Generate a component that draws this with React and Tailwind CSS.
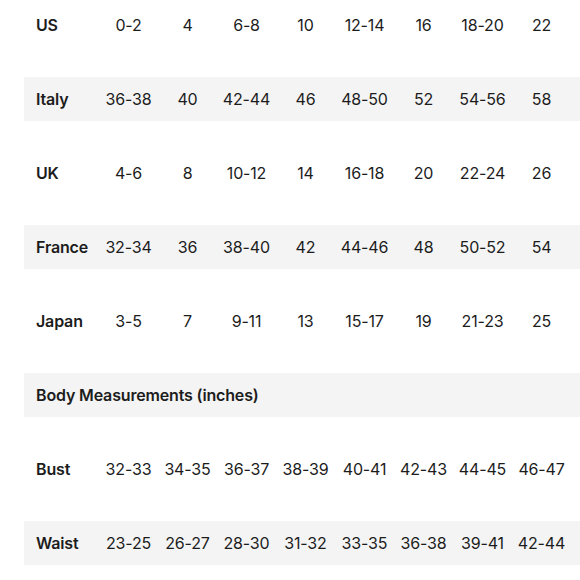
const sizes = [
  { label: 'US', values: ['0-2', '4', '6-8', '10', '12-14', '16', '18-20', '22'] },
  { label: 'Italy', values: ['36-38', '40', '42-44', '46', '48-50', '52', '54-56', '58'], shaded: true },
  { label: 'UK', values: ['4-6', '8', '10-12', '14', '16-18', '20', '22-24', '26'] },
  { label: 'France', values: ['32-34', '36', '38-40', '42', '44-46', '48', '50-52', '54'], shaded: true },
  { label: 'Japan', values: ['3-5', '7', '9-11', '13', '15-17', '19', '21-23', '25'] },
]

const body = [
  { label: 'Bust', values: ['32-33', '34-35', '36-37', '38-39', '40-41', '42-43', '44-45', '46-47'] },
  { label: 'Waist', values: ['23-25', '26-27', '28-30', '31-32', '33-35', '36-38', '39-41', '42-44'], shaded: true },
]

function Row({ label, values, shaded }) {
  return (
    <div className={`ml-[24px] h-[44px] flex items-center ${shaded ? 'bg-[#f4f4f4]' : 'bg-white'}`}>
      <div className="w-[75px] shrink-0 pl-3 font-semibold">{label}</div>
      {values.map((v, i) => (
        <div key={i} className="w-[59px] shrink-0 text-center">{v}</div>
      ))}
    </div>
  )
}

export default function App() {
  return (
    <div className="w-[580px] h-[580px] overflow-hidden bg-white text-[16px] text-[#1c1c1c] font-['Inter',sans-serif] tracking-[-0.01em]">
      <div className="pt-[3px] flex flex-col gap-[30px]">
        {sizes.map(r => (
          <Row key={r.label} {...r} />
        ))}
        <div className="ml-[24px] h-[44px] flex items-center pl-3 bg-[#f4f4f4] font-semibold">
          Body Measurements (inches)
        </div>
        {body.map(r => (
          <Row key={r.label} {...r} />
        ))}
      </div>
    </div>
  )
}
